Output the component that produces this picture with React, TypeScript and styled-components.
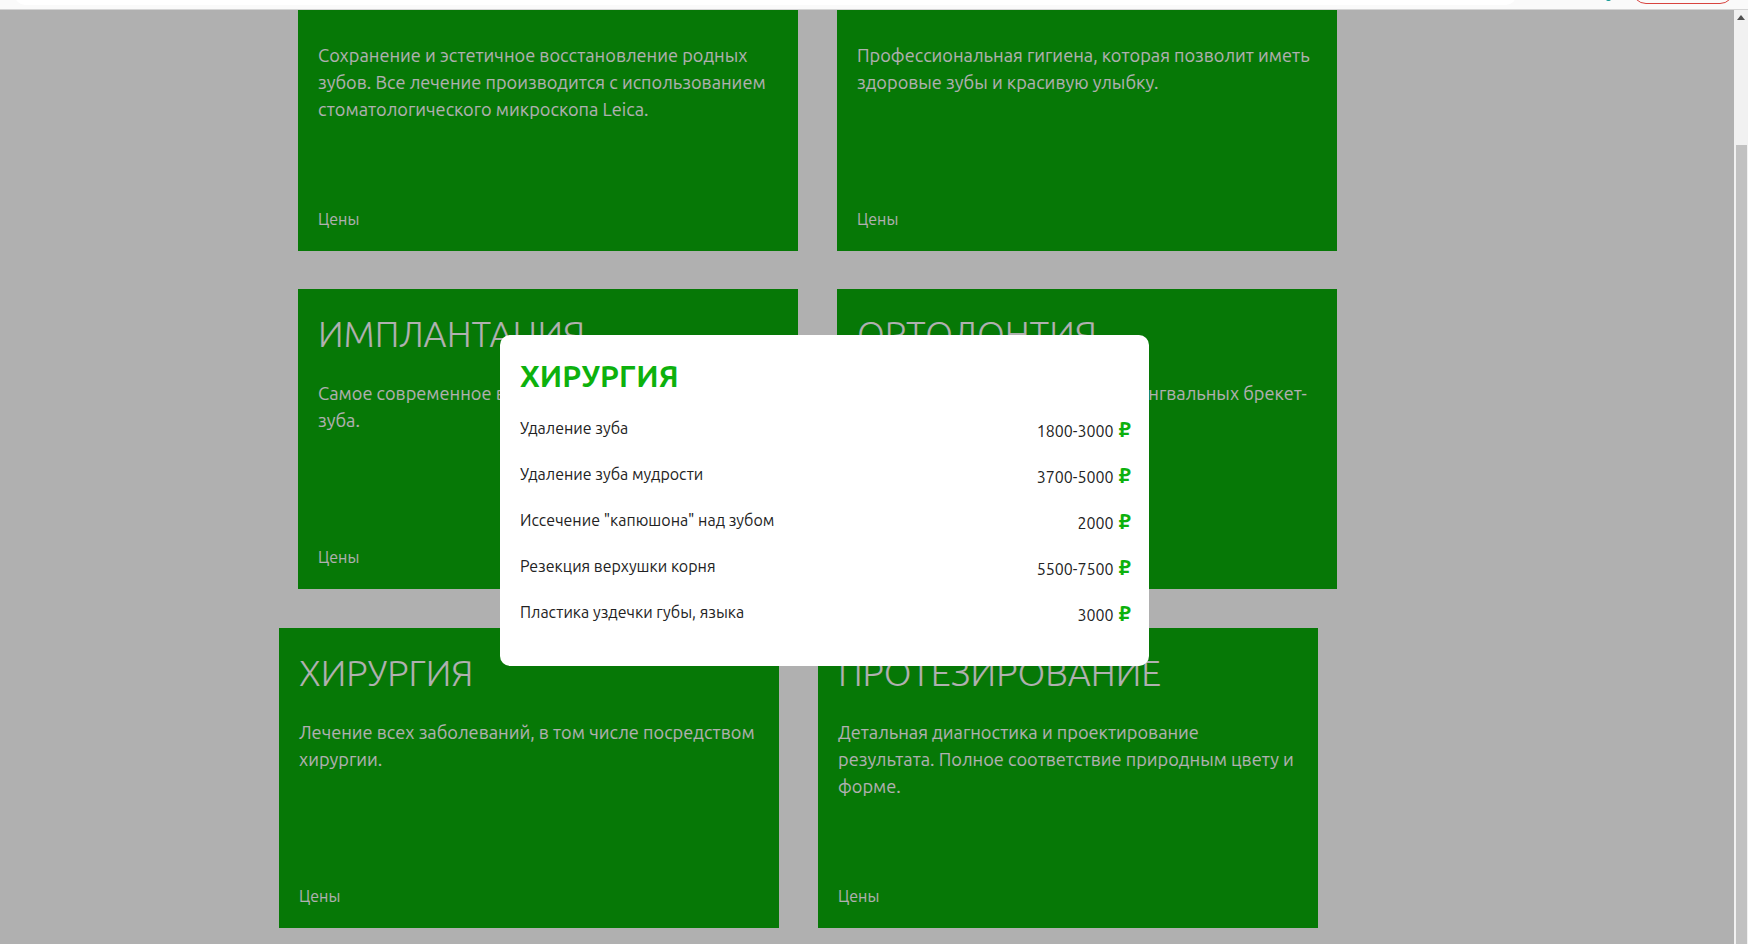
import styled, { createGlobalStyle } from "styled-components";

const FONT = `"Ubuntu", "Open Sans", "DejaVu Sans", sans-serif`;

const GlobalStyle = createGlobalStyle`
  html, body {
    margin: 0;
    padding: 0;
    overflow: hidden;
    background: #fff;
  }
  body {
    font-family: ${FONT};
  }
`;

const Page = styled.div`
  width: 1748px;
  height: 944px;
  display: flex;
  flex-direction: column;
`;

const Header = styled.header`
  height: 9px;
  flex: none;
  display: flex;
  align-items: flex-end;
  padding: 0 14px 0 15px;
  background: #fafafa;
  border-bottom: 1px solid #d4d4d4;
  overflow: hidden;
  position: relative;
  z-index: 3;
`;

const SearchBox = styled.div`
  width: 1501px;
  height: 30px;
  margin-bottom: 4px;
  background: #fff;
  border-radius: 0 0 10px 10px;
  flex: none;
`;

const Badge = styled.div`
  width: 5px;
  height: 10px;
  margin: 0 0 8px 90px;
  background: #1a9c98;
  border-radius: 2px;
  flex: none;
`;

const Pill = styled.div`
  width: 100px;
  height: 30px;
  margin: 0 0 5px 21px;
  border: 1.5px solid #d8433f;
  border-radius: 14px;
  flex: none;
`;

const Body = styled.div`
  flex: 1;
  display: flex;
  min-height: 0;
`;

const Viewport = styled.main`
  flex: 1;
  overflow: hidden;
  background: #fff;
`;

const Track = styled.div`
  margin-top: -59px;
  padding-left: 298px;
  display: flex;
  flex-direction: column;
  gap: 38.4px;
`;

const Row = styled.div<{ $shift?: number }>`
  display: flex;
  gap: 39px;
  margin-left: ${(p) => p.$shift ?? 0}px;
`;

const Card = styled.article`
  width: 500px;
  height: 300px;
  box-sizing: border-box;
  padding: 23px 20px 20px;
  background: #0aae0a;
  color: #fff;
  display: flex;
  flex-direction: column;
`;

const CardTitle = styled.h2`
  margin: 0;
  font-size: 36px;
  line-height: 43px;
  font-weight: 300;
  text-transform: uppercase;
`;

const CardText = styled.p`
  margin: 25px 0 0;
  font-size: 18.2px;
  line-height: 27px;
`;

const PriceLink = styled.a`
  margin-top: auto;
  font-size: 16px;
  line-height: 24px;
  color: #fff;
  text-decoration: none;
`;

const Scrollbar = styled.div`
  width: 14px;
  flex: none;
  background: #f1f1f1;
  display: flex;
  flex-direction: column;
`;

const ScrollArrow = styled.div`
  height: 14px;
  display: flex;
  align-items: center;
  justify-content: center;
`;

const Thumb = styled.div`
  flex: 1;
  margin: 121px 1px 0 2px;
  background: #c1c1c1;
`;

const Overlay = styled.div`
  position: fixed;
  top: 10px;
  left: 0;
  right: 14px;
  bottom: 0;
  background: rgba(0, 0, 0, 0.31);
  padding: 325px 0 0 500px;
  z-index: 2;
`;

const Modal = styled.div`
  width: 649px;
  box-sizing: border-box;
  padding: 23px 18px 20px 20px;
  background: #fff;
  border-radius: 10px;
  color: #222;
`;

const ModalTitle = styled.h3`
  margin: 0 0 22px;
  font-size: 30px;
  line-height: 36px;
  font-weight: 700;
  color: #0db10d;
`;

const PriceRow = styled.div`
  height: 24px;
  display: flex;
  justify-content: space-between;
  align-items: flex-start;
  margin-bottom: 22px;
  font-size: 16px;
  line-height: 24px;
`;

const Price = styled.span`
  padding-top: 3px;
  display: flex;
  align-items: baseline;
  gap: 5px;
`;

const Ruble = styled.span`
  color: #0db10d;
  font-weight: 700;
  font-size: 22px;
  line-height: 20px;
`;

const services = [
  {
    title: "Терапия",
    text: "Сохранение и эстетичное восстановление родных зубов. Все лечение производится с использованием стоматологического микроскопа Leica.",
  },
  {
    title: "Гигиена",
    text: "Профессиональная гигиена, которая позволит иметь здоровые зубы и красивую улыбку.",
  },
  {
    title: "Имплантация",
    text: "Самое современное восстановление утраченного зуба.",
  },
  {
    title: "Ортодонтия",
    text: "Коррекция прикуса с помощью лингвальных брекет-систем.",
  },
  {
    title: "Хирургия",
    text: "Лечение всех заболеваний, в том числе посредством хирургии.",
  },
  {
    title: "Протезирование",
    text: "Детальная диагностика и проектирование результата. Полное соответствие природным цвету и форме.",
  },
];

const prices = [
  ["Удаление зуба", "1800-3000"],
  ["Удаление зуба мудрости", "3700-5000"],
  ['Иссечение "капюшона" над зубом', "2000"],
  ["Резекция верхушки корня", "5500-7500"],
  ["Пластика уздечки губы, языка", "3000"],
];

function ServiceCard({ title, text }: { title: string; text: string }) {
  return (
    <Card>
      <CardTitle>{title}</CardTitle>
      <CardText>{text}</CardText>
      <PriceLink href="#">Цены</PriceLink>
    </Card>
  );
}

export default function App() {
  return (
    <>
      <GlobalStyle />
      <Page>
        <Header>
          <SearchBox />
          <Badge />
          <Pill />
        </Header>
        <Body>
          <Viewport>
            <Track>
              <Row>
                <ServiceCard {...services[0]} />
                <ServiceCard {...services[1]} />
              </Row>
              <Row>
                <ServiceCard {...services[2]} />
                <ServiceCard {...services[3]} />
              </Row>
              <Row $shift={-19}>
                <ServiceCard {...services[4]} />
                <ServiceCard {...services[5]} />
              </Row>
            </Track>
          </Viewport>
          <Scrollbar>
            <ScrollArrow>
              <svg width="8" height="5" viewBox="0 0 8 5">
                <polygon points="0,5 4,0 8,5" fill="#505050" />
              </svg>
            </ScrollArrow>
            <Thumb />
          </Scrollbar>
        </Body>
        <Overlay>
          <Modal>
            <ModalTitle>ХИРУРГИЯ</ModalTitle>
            {prices.map(([name, value]) => (
              <PriceRow key={name}>
                <span>{name}</span>
                <Price>
                  {value}
                  <Ruble>₽</Ruble>
                </Price>
              </PriceRow>
            ))}
          </Modal>
        </Overlay>
      </Page>
    </>
  );
}
